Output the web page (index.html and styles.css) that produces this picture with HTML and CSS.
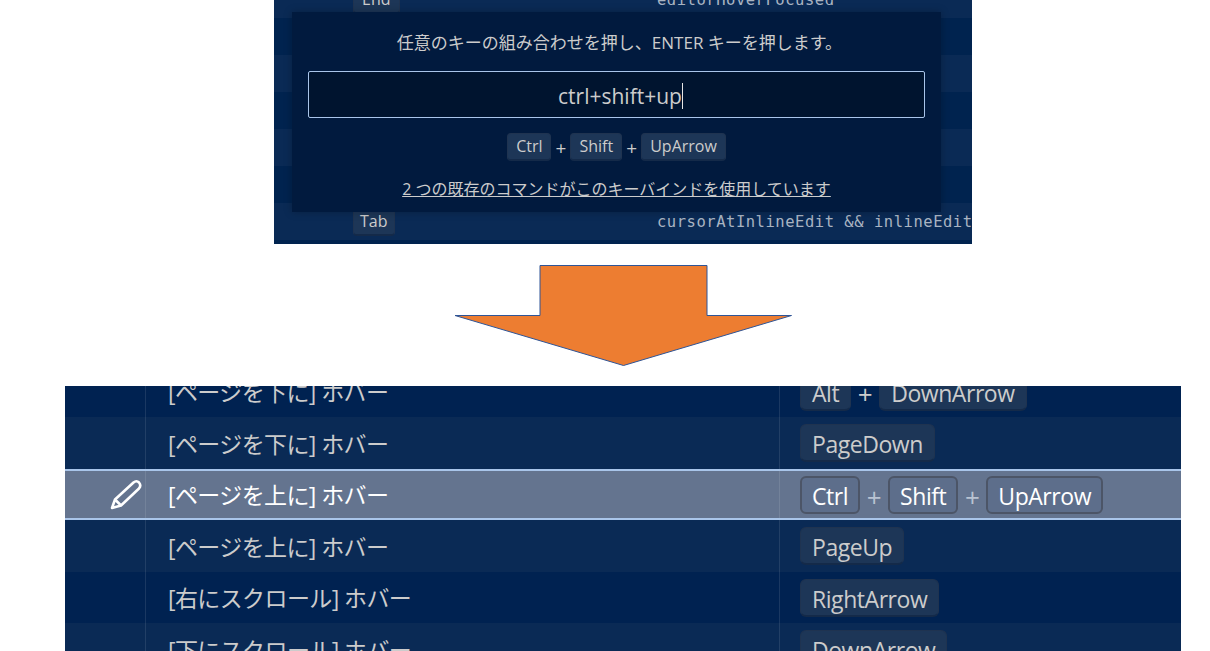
FILE: index.html
```html
<!DOCTYPE html>
<html lang="ja">
<head>
<meta charset="utf-8">
<title>キーバインド</title>
<link rel="stylesheet" href="styles.css">
</head>
<body>
<main class="slide">
  <section class="shot-top">
    <div class="top-rows">
      <div class="top-row alt"><span class="top-key"><kbd class="key-s">End</kbd></span><span class="top-when">editorHoverFocused</span></div>
      <div class="top-row"></div>
      <div class="top-row alt"></div>
      <div class="top-row"></div>
      <div class="top-row alt"></div>
      <div class="top-row"></div>
      <div class="top-row alt"><span class="top-key"><kbd class="key-s key-tab">Tab</kbd></span><span class="top-when">cursorAtInlineEdit &amp;&amp; inlineEdit</span></div>
      <div class="top-row"></div>
    </div>
    <div class="dialog">
      <p class="dialog-msg">任意のキーの組み合わせを押し、ENTER キーを押します。</p>
      <div class="dialog-input"><span>ctrl+shift+up</span><i class="caret"></i></div>
      <div class="dialog-keys"><kbd class="key-s">Ctrl</kbd><span class="plus-s">+</span><kbd class="key-s">Shift</kbd><span class="plus-s">+</span><kbd class="key-s">UpArrow</kbd></div>
      <a class="dialog-link">2 つの既存のコマンドがこのキーバインドを使用しています</a>
    </div>
  </section>

  <svg class="arrow" width="339" height="103" viewBox="0 0 339 103" aria-hidden="true">
    <path d="M86 .5H253V50.5H337.5L169.500 100.500 1 50.5H86Z" fill="#ed7d31" stroke="#2f5597" stroke-width="1"/>
  </svg>

  <section class="shot-bottom">
    <div class="rows">
      <div class="row"><div class="c-icon"></div><div class="c-cmd">[ページを下に] ホバー</div><div class="c-keys"><kbd class="key">Alt</kbd><span class="plus">+</span><kbd class="key">DownArrow</kbd></div></div>
      <div class="row alt"><div class="c-icon"></div><div class="c-cmd">[ページを下に] ホバー</div><div class="c-keys"><kbd class="key">PageDown</kbd></div></div>
      <div class="row selected"><div class="c-icon">
        <svg class="pencil" width="32" height="31" viewBox="0 0 32 31" aria-hidden="true"><path d="M2 29 5 20.500 23.500 3.500Q26.500 1 29 3.500 31.500 6.500 29 9.500L11 26.500ZM5 20.500 11 26.500" fill="none" stroke="#fff" stroke-width="2.600" stroke-linejoin="round"/></svg>
      </div><div class="c-cmd">[ページを上に] ホバー</div><div class="c-keys"><kbd class="key">Ctrl</kbd><span class="plus">+</span><kbd class="key">Shift</kbd><span class="plus">+</span><kbd class="key">UpArrow</kbd></div></div>
      <div class="row alt"><div class="c-icon"></div><div class="c-cmd">[ページを上に] ホバー</div><div class="c-keys"><kbd class="key">PageUp</kbd></div></div>
      <div class="row"><div class="c-icon"></div><div class="c-cmd">[右にスクロール] ホバー</div><div class="c-keys"><kbd class="key">RightArrow</kbd></div></div>
      <div class="row alt"><div class="c-icon"></div><div class="c-cmd">[下にスクロール] ホバー</div><div class="c-keys"><kbd class="key">DownArrow</kbd></div></div>
    </div>
  </section>
</main>
</body>
</html>
```

FILE: styles.css
```css
* { box-sizing: border-box; }
html, body { margin: 0; height: 100%; background: #fff; overflow: hidden; }
body { font-family: "Open Sans", "Noto Sans CJK JP", sans-serif; color: #ccc; }
.slide { width: 1210px; height: 651px; display: flex; flex-direction: column; overflow: hidden; }

/* top screenshot */
.shot-top { position: relative; width: 698px; height: 244px; margin-left: 274px; flex: none; overflow: hidden; background: #00234f; }
.top-rows { margin-top: -19px; }
.top-row { height: 37px; display: flex; align-items: center; background: #00234f; }
.top-row.alt { background: #0a2a55; }
.top-key { width: 383px; padding-left: 79px; flex: none; }
.top-when { font-family: "DejaVu Sans Mono", monospace; font-size: 15.500px; color: #a9b4c2; white-space: nowrap; letter-spacing: .53px; }
.key-s { display: inline-block; font-family: inherit; font-size: 16px; line-height: 22px; height: 28px; padding: 1px 8px 0; color: #ccc; background: #1d3657; border: 1px solid #1f3350; border-bottom: 2px solid #142a49; border-radius: 4px; }
.key-tab { padding: 1px 6px 0; }

.dialog { position: absolute; left: 18px; top: 12px; width: 649px; height: 200px; background: #011a3e; box-shadow: 0 0 8px rgba(0, 0, 0, .25); display: flex; flex-direction: column; align-items: center; padding: 0 16px; }
.dialog-msg { margin: 16px 0 0 6px; height: 30px; line-height: 30px; font-size: 17px; white-space: nowrap; color: #ccc; }
.dialog-input { width: 100%; height: 47px; margin-top: 13px; padding: 2px 0 0 8px; background: #00142f; border: 1px solid #a9c5ea; border-radius: 2px; display: flex; justify-content: center; align-items: center; font-size: 21px; color: #ccc; }
.caret { width: 1px; height: 26px; background: #e6e6e6; }
.dialog-keys { display: flex; align-items: center; margin-top: 15px; height: 28px; }
.plus-s { width: 19px; text-align: center; font-size: 19px; padding-top: 2px; }
.dialog-link { margin-top: 15px; font-size: 16px; line-height: 26px; text-decoration: underline; color: #ccc; white-space: nowrap; }

/* arrow */
.arrow { display: block; flex: none; margin: 21px 0 0 454px; }

/* bottom screenshot */
.shot-bottom { width: 1116px; height: 265px; margin: 18px 0 0 65px; flex: none; overflow: hidden; background: #002251; }
.rows { margin-top: -20.500px; }
.row { height: 51.500px; display: grid; grid-template-columns: 81px 634px 1fr; background: #002251; }
.row.alt { background: #0a2a55; }
.row.selected { background: #64748f; border-top: 2px solid #a9c5ea; border-bottom: 2px solid #a9c5ea; color: #fff; }
.c-icon { border-right: 1px solid rgba(255, 255, 255, .1); display: flex; align-items: center; justify-content: flex-end; padding-right: 3px; }
.c-cmd { border-right: 1px solid rgba(255, 255, 255, .1); padding-left: 22px; font-size: 23px; letter-spacing: -.6px; display: flex; align-items: center; white-space: nowrap; }
.c-keys { padding-left: 20px; display: flex; align-items: center; }
.key { display: inline-block; font-family: inherit; font-size: 23px; letter-spacing: -.45px; line-height: 32px; height: 38px; padding: 3px 11px 0; margin-top: 1px; color: #ccc; background: #1d3657; border: 1px solid #1f3350; border-bottom: 2px solid #142a49; border-radius: 6px; }
.plus { width: 28px; text-align: center; font-size: 26px; padding-top: 5px; color: #ccc; }
.selected .key { background: #5d6e8b; border: 2px solid #4c5567; padding: 2px 10px 0; color: #fff; }
.selected .plus { color: #b9c3d2; }
```
